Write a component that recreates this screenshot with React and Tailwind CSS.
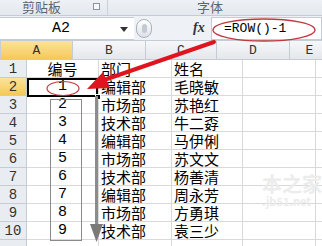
import React from 'react';

const cols = [
    { key: 'A', w: 'w-[72px]' },
    { key: 'B', w: 'w-[73px]' },
    { key: 'C', w: 'w-[71px]' },
    { key: 'D', w: 'w-[73px]' },
    { key: 'E', w: 'w-[40px]' },
];

const rows = [
    ['编号', '部门', '姓名'],
    ['1', '编辑部', '毛晓敏'],
    ['2', '市场部', '苏艳红'],
    ['3', '技术部', '牛二孬'],
    ['4', '编辑部', '马伊俐'],
    ['5', '市场部', '苏文文'],
    ['6', '技术部', '杨善清'],
    ['7', '编辑部', '周永芳'],
    ['8', '市场部', '方勇琪'],
    ['9', '技术部', '袁三少'],
];

const cjk = { fontFamily: '"Noto Sans CJK SC", "Noto Sans", sans-serif' };
const mono = { fontFamily: '"Liberation Mono", "DejaVu Sans Mono", monospace' };

const App = () => {
    return (
        <div className="relative w-[322px] h-[246px] overflow-hidden bg-white">
            {/* ribbon group labels, cut at the top like the screenshot */}
            <div className="flex h-[16px] overflow-hidden bg-gradient-to-b from-[#eef1f5] to-[#e3e8ee] border-b border-[#c5ccd6] text-[13px] leading-[13px] text-[#5b6470]" style={cjk}>
                <div className="relative flex w-[108px] items-start pl-[22px] border-r border-[#c9d0d9]">
                    <span>剪贴板</span>
                    <span className="absolute right-[7px] top-[3px] w-[7px] h-[7px] border border-[#8a94a2] bg-[#f7f8fa]" />
                </div>
                <div className="flex-1 flex justify-center -ml-[10px]">
                    <span>字体</span>
                </div>
            </div>

            {/* formula bar */}
            <div className="flex h-[25px] items-center bg-[#eef1f5] border-b border-[#c5ccd6]">
                <div className="relative flex h-[23px] w-[134px] items-center justify-center bg-white border-y border-[#c5ccd6] text-[15px] leading-none text-black" style={mono}>
                    <span className="-ml-[12px]">A2</span>
                    <svg className="absolute right-[6px] top-[9px]" width="8" height="5" viewBox="0 0 8 5">
                        <path d="M0 0 L8 0 L4 5 Z" fill="#333" />
                    </svg>
                </div>
                <div className="ml-[2px] w-[16px] h-[19px] rounded-full border border-[#a9b1bc] bg-gradient-to-b from-white to-[#dde2e8] flex items-center justify-center">
                    <div className="w-[5px] h-[9px] rounded-full bg-[#c4cad2]" />
                </div>
                <div className="flex-1" />
                <span className="w-[16px] text-[14px] leading-none italic font-bold text-[#333]" style={{ fontFamily: '"Liberation Serif", serif' }}>fx</span>
                <div className="ml-[2px] flex h-[23px] w-[111px] items-center whitespace-nowrap bg-white border border-[#c5ccd6] pl-[12px] text-[13px] leading-none text-black" style={mono}>
                    =ROW()-1
                </div>
            </div>

            {/* sheet */}
            <div className="flex flex-col leading-none">
                <div className="flex h-[19px] border-b border-[#c5ccd6] bg-gradient-to-b from-[#f6f7f9] to-[#e4e7eb]">
                    <div className="relative w-[27px] border-r border-[#c5ccd6]">
                        <svg className="absolute right-[3px] bottom-[3px]" width="9" height="9" viewBox="0 0 9 9">
                            <path d="M9 0 L9 9 L0 9 Z" fill="#c3c8cf" />
                        </svg>
                    </div>
                    {cols.map((c) => (
                        <div
                            key={c.key}
                            className={`${c.w} shrink-0 flex items-center justify-center border-r border-[#c5ccd6] text-[13px] text-[#333] ${c.key === 'A' ? 'bg-gradient-to-b from-[#fbe39a] to-[#f5c955]' : ''}`}
                            style={mono}
                        >
                            {c.key}
                        </div>
                    ))}
                </div>
                {rows.map((r, i) => (
                    <div key={i} className="flex h-[18px]">
                        <div
                            className={`w-[27px] shrink-0 flex items-center justify-center border-r border-b border-[#c5ccd6] text-[14px] text-[#333] ${i === 1 ? 'bg-gradient-to-b from-[#fbe39a] to-[#f5c955]' : 'bg-[#e9ecf0]'}`}
                            style={mono}
                        >
                            {i + 1}
                        </div>
                        <div className="w-[72px] shrink-0 flex items-center justify-center border-r border-b border-[#d9d9d9] text-[15px] text-black" style={i === 0 ? cjk : mono}>
                            {r[0]}
                        </div>
                        <div className="w-[73px] shrink-0 flex items-center pl-[2px] border-r border-b border-[#d9d9d9] text-[15px] text-black" style={cjk}>
                            {r[1]}
                        </div>
                        <div className="w-[71px] shrink-0 flex items-center pl-[2px] border-r border-b border-[#d9d9d9] text-[15px] text-black" style={cjk}>
                            {r[2]}
                        </div>
                        <div className="w-[73px] shrink-0 border-r border-b border-[#d9d9d9]" />
                        <div className="w-[40px] shrink-0 border-b border-[#d9d9d9]" />
                    </div>
                ))}
                <div className="flex h-[18px]">
                    <div className="w-[27px] shrink-0 border-r border-[#c5ccd6] bg-[#e9ecf0]" />
                    <div className="w-[72px] shrink-0 border-r border-[#d9d9d9]" />
                    <div className="w-[73px] shrink-0 border-r border-[#d9d9d9]" />
                    <div className="w-[71px] shrink-0 border-r border-[#d9d9d9]" />
                    <div className="w-[73px] shrink-0 border-r border-[#d9d9d9]" />
                </div>
            </div>

            {/* active cell A2 */}
            <div className="absolute left-[27px] top-[78px] w-[71px] h-[19px] border-2 border-black" />
            <div className="absolute left-[95px] top-[94px] w-[6px] h-[6px] bg-black border border-white" />

            {/* gray box around 2..9 */}
            <div className="absolute left-[50px] top-[99px] w-[32px] h-[142px] border border-[#8a8a8a]" />

            {/* drag indicator */}
            <svg className="absolute left-[86px] top-[96px]" width="18" height="150" viewBox="0 0 18 150">
                <rect x="9" y="0" width="3" height="136" fill="#8c8c8c" />
                <path d="M4 128 L17 128 L10.5 146 Z" fill="#7a7a7a" />
            </svg>

            {/* red annotations */}
            <svg className="absolute left-0 top-0 pointer-events-none" width="322" height="246" viewBox="0 0 322 246">
                <ellipse cx="264" cy="30" rx="51" ry="11" fill="none" stroke="#c0393f" strokeWidth="1.3" />
                <ellipse cx="63" cy="88.5" rx="16" ry="7" fill="none" stroke="#c0393f" strokeWidth="1.2" />
                <path d="M214 42 L104 80" stroke="#e0141e" strokeWidth="4" strokeLinecap="round" />
                <path d="M87 89 L103 72 L110 88 Z" fill="#e0141e" />
            </svg>

            {/* faint watermark */}
            <div className="absolute left-[262px] top-[174px] text-[20px] font-bold text-[#ececec] leading-none" style={cjk}>
                本之家
            </div>
            <div className="absolute left-[262px] top-[196px] text-[11px] font-bold text-[#ebebeb] leading-none" style={cjk}>
                .jb51.net
            </div>
        </div>
    );
};

export default App;
